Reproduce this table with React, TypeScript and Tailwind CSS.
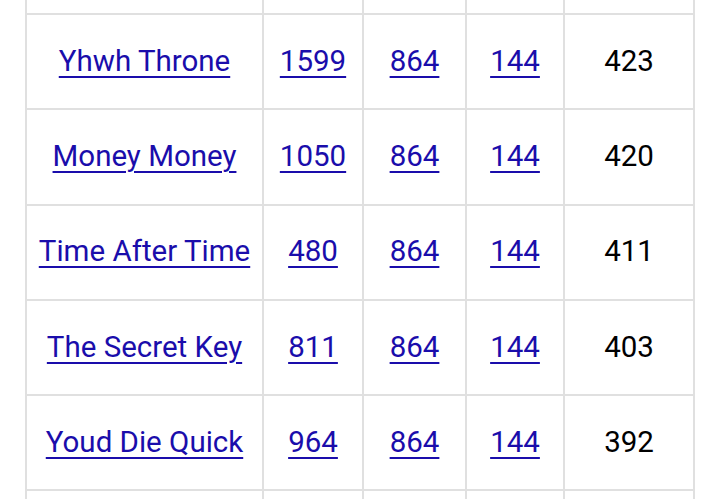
const rows = [
  { name: "Yhwh Throne", a: "1599", b: "864", c: "144", d: "423" },
  { name: "Money Money", a: "1050", b: "864", c: "144", d: "420" },
  { name: "Time After Time", a: "480", b: "864", c: "144", d: "411" },
  { name: "The Secret Key", a: "811", b: "864", c: "144", d: "403" },
  { name: "Youd Die Quick", a: "964", b: "864", c: "144", d: "392" },
];

const cell = "border-2 border-[#e0e0e0] text-center align-middle p-0";
const link = "text-[#1a0dab] underline decoration-2 underline-offset-[5px]";

export default function App() {
  return (
    <div className="h-[499px] overflow-hidden bg-white font-['Roboto',sans-serif] text-[29.5px] leading-none">
      <table className="ml-[25px] border-collapse table-fixed">
        <colgroup>
          <col className="w-[237px]" />
          <col className="w-[100px]" />
          <col className="w-[103px]" />
          <col className="w-[98px]" />
          <col className="w-[130px]" />
        </colgroup>
        <tbody>
          <tr className="h-[14px]">
            {[0, 1, 2, 3, 4].map((i) => (
              <td key={i} className={cell + " border-t-0"} />
            ))}
          </tr>
          {rows.map((r) => (
            <tr key={r.name} className="h-[95.3px]">
              <td className={cell}>
                <a href="#" className={link}>{r.name}</a>
              </td>
              <td className={cell}>
                <a href="#" className={link}>{r.a}</a>
              </td>
              <td className={cell}>
                <a href="#" className={link}>{r.b}</a>
              </td>
              <td className={cell}>
                <a href="#" className={link}>{r.c}</a>
              </td>
              <td className={cell + " text-black"}>{r.d}</td>
            </tr>
          ))}
          <tr className="h-[95px]">
            {[0, 1, 2, 3, 4].map((i) => (
              <td key={i} className={cell} />
            ))}
          </tr>
        </tbody>
      </table>
    </div>
  );
}
